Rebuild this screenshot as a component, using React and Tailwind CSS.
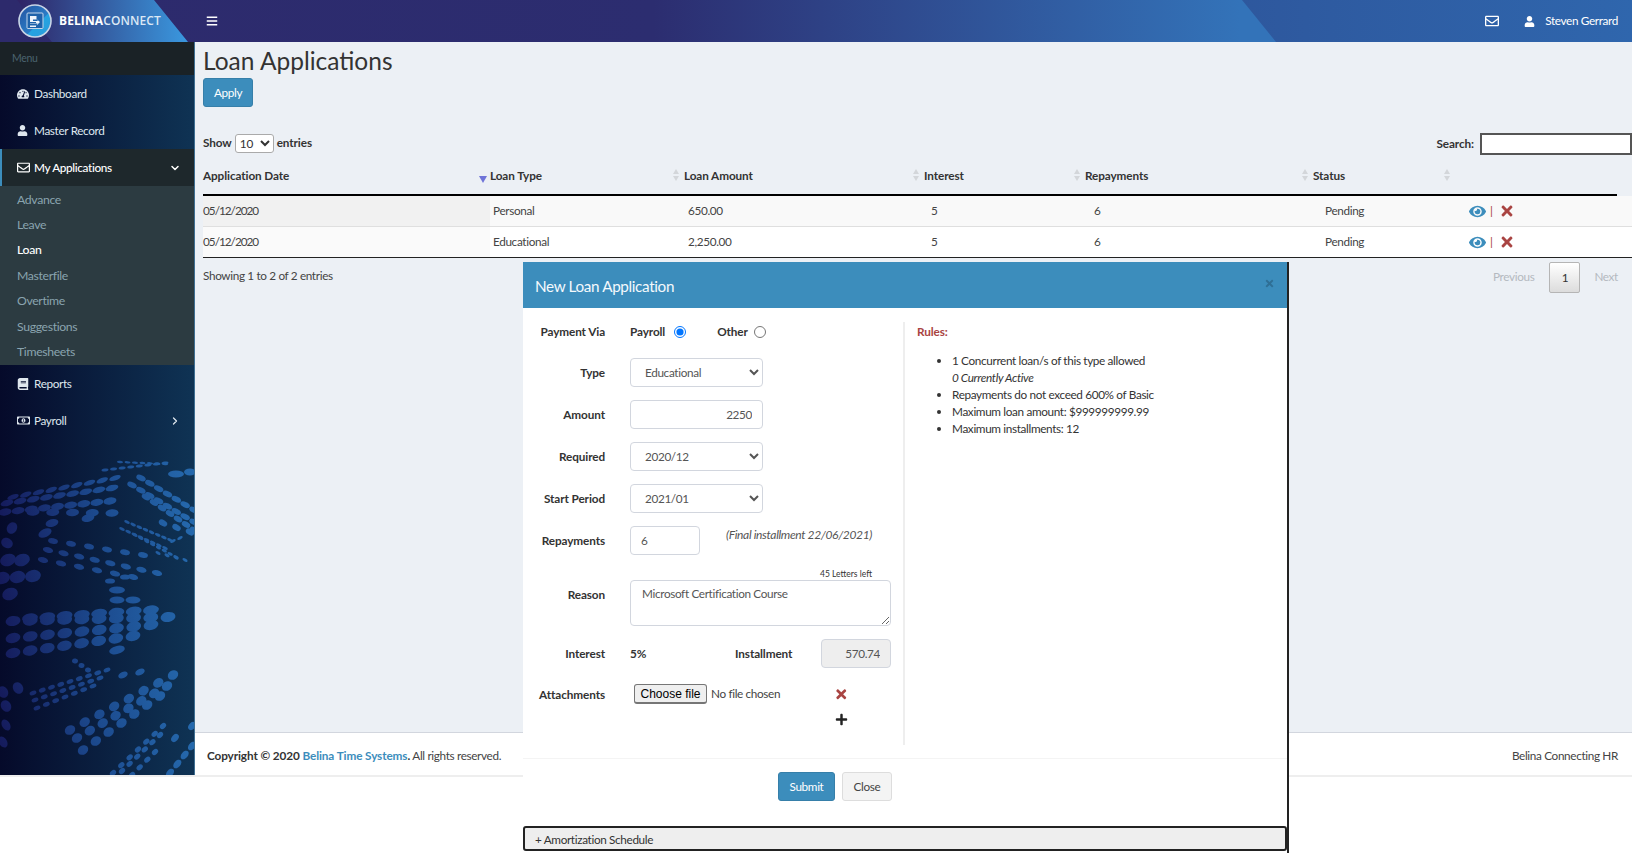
import { ChevronDown, ChevronRight } from "lucide-react";
import {
    FaBars,
    FaBook,
    FaEye,
    FaPlus,
    FaRegEnvelope,
    FaRegMoneyBillAlt,
    FaTachometerAlt,
    FaTimes,
    FaUser,
} from "react-icons/fa";

const gridCols = "grid grid-cols-[287px_194px_240px_161px_228px_142px_1fr]";

// x0, y0, x1, y1, count, rx, ry, rotation
const dotRows = [
    [105, 470, 165, 463, 8, 3.5, 1.5, -8],
    [120, 462, 165, 464, 7, 3, 1.2, 5],
    [176, 474, 176, 474, 1, 8, 3.5, 0],
    [190, 472, 190, 472, 1, 6, 3.5, 0],
    [13, 497, 115, 478, 9, 6, 2.5, -20],
    [7, 503, 112, 488, 9, 6.5, 3, -15],
    [5, 512, 110, 501, 9, 6.5, 3.5, -10],
    [33, 512, 112, 513, 5, 6.5, 3.8, -5],
    [52, 523, 88, 518, 2, 6.5, 3.8, -15],
    [45, 533, 45, 533, 1, 7, 4, -25],
    [141, 478, 194, 510, 7, 5, 2.8, 25],
    [132, 485, 194, 522, 8, 5, 2.8, 25],
    [146, 497, 194, 530, 7, 4.6, 2.8, 30],
    [163, 523, 190, 532, 3, 4.5, 3, 30],
    [127, 522, 170, 540, 8, 3, 1.5, 25],
    [122, 529, 165, 548, 8, 3, 1.5, 25],
    [135, 535, 176, 557, 8, 2.8, 1.5, 25],
    [158, 553, 185, 560, 4, 2.8, 1.5, 30],
    [173, 541, 180, 538, 2, 3, 1.5, -30],
    [53, 541, 143, 555, 6, 5, 2.8, 12],
    [48, 550, 157, 573, 8, 5.2, 2.8, 14],
    [43, 560, 133, 577, 6, 5.2, 2.8, 14],
    [110, 581, 125, 577, 2, 5, 2.6, 0],
    [12, 528, 12, 528, 1, 5, 6, 30],
    [7, 543, 7, 543, 1, 6, 5, 30],
    [8, 560, 22, 560, 2, 8, 6, -20],
    [2, 578, 33, 576, 3, 8, 6, -15],
    [10, 594, 10, 594, 1, 8, 6, -20],
    [117, 590, 117, 590, 1, 8, 3.5, 0],
    [117, 600, 133, 600, 2, 7.5, 3.5, 0],
    [30, 618, 151, 610, 8, 8, 4.5, -10],
    [13, 621, 168, 617, 10, 7.5, 5, -10],
    [13, 638, 151, 625, 9, 7.5, 5, -15],
    [13, 653, 133, 636, 8, 7.5, 5, -15],
    [117, 650, 117, 650, 1, 8, 4, -15],
    [33, 693, 107, 670, 9, 3.5, 2.2, -20],
    [35, 700, 100, 678, 8, 3.5, 2.2, -20],
    [37, 708, 93, 686, 7, 3.5, 2.2, -20],
    [75, 661, 88, 670, 3, 3, 2.5, 10],
    [70, 730, 173, 675, 8, 5.5, 4.5, -35],
    [77, 738, 167, 686, 8, 5.5, 4.5, -35],
    [83, 750, 160, 696, 7, 5.5, 4.5, -35],
    [123, 675, 140, 672, 2, 5, 3, -25],
    [113, 773, 163, 726, 7, 3.5, 2.5, -40],
    [122, 771, 160, 735, 6, 3.5, 2.5, -40],
    [132, 775, 155, 752, 4, 3.5, 2.5, -40],
    [170, 773, 192, 746, 4, 5, 3.2, -50],
    [175, 738, 192, 726, 2, 4.5, 3.2, -50],
    [3, 692, 18, 688, 2, 5, 6, -30],
    [6, 706, 13, 706, 1, 5, 6, -30],
    [6, 725, 6, 725, 1, 4, 6, -30],
    [3, 742, 3, 742, 1, 4, 6, -30],
];

function GlobeDots() {
    const dots = [];
    dotRows.forEach(([x0, y0, x1, y1, n, rx, ry, rot], i) => {
        for (let k = 0; k < n; k++) {
            const t = n > 1 ? k / (n - 1) : 0;
            const x = x0 + (x1 - x0) * t;
            const y = y0 + (y1 - y0) * t;
            dots.push(
                <ellipse key={i + "-" + k} cx={x} cy={y} rx={rx} ry={ry} transform={`rotate(${rot} ${x} ${y})`} />
            );
        }
    });
    return (
        <svg className="absolute left-0 top-[-42px] h-[775px] w-[194px]" viewBox="0 0 194 775">
            <defs>
                <linearGradient id="dotFill" gradientUnits="userSpaceOnUse" x1="0" y1="0" x2="194" y2="0">
                    <stop offset="0" stopColor="#151b5c" />
                    <stop offset="0.5" stopColor="#1c4a8e" />
                    <stop offset="1" stopColor="#2569ad" />
                </linearGradient>
            </defs>
            <g fill="url(#dotFill)">{dots}</g>
        </svg>
    );
}

function Logo() {
    return (
        <svg className="h-[34px] w-[34px] shrink-0" viewBox="0 0 34 34">
            <defs>
                <linearGradient id="logoFill" x1="0" y1="0" x2="1" y2="1">
                    <stop offset="0" stopColor="#24529f" />
                    <stop offset="0.58" stopColor="#2a7cc6" />
                    <stop offset="0.6" stopColor="#25a3e0" />
                    <stop offset="1" stopColor="#2d9cdc" />
                </linearGradient>
            </defs>
            <circle cx="17" cy="17" r="16" fill="url(#logoFill)" stroke="#c9d5e6" strokeWidth="1.6" />
            <rect x="9" y="9" width="16" height="15.500" rx="1" fill="#1e62aa" stroke="#c4d6ea" strokeWidth="1" />
            <path d="M12 12h6.500v3.500h-3.500v1.500h5l-1.500-2 3.500 3-3.500 3.500 1-2h-7.500v2h6v1.500H12v-4h6v-1H12z" fill="#eef4fb" />
        </svg>
    );
}

function Header() {
    return (
        <header className="relative flex h-[42px] items-center overflow-hidden bg-[linear-gradient(90deg,#2d2a6c,#2c2d70_40%,#3373b9_76%)] text-white">
            <div className="absolute inset-0 w-[188px] bg-[linear-gradient(90deg,#2f2466,#2f2466_10%,#3a98df_100%)] [clip-path:polygon(0_0,154px_0,188px_42px,52px_42px,17px_0)]" />
            <div className="absolute inset-0 bg-[linear-gradient(90deg,#2a2a6c,#2f66ad)] [clip-path:polygon(1242px_0,1632px_0,1632px_42px,1276px_42px)]" />
            <div className="relative flex w-[194px] items-center pl-[18px]">
                <Logo />
                <span className="ml-[7px] font-['Open_Sans',sans-serif] text-[12px] tracking-[0.1px]">
                    <span className="font-bold">BELINA</span>
                    <span className="font-semibold text-[#dbe8f5]">CONNECT</span>
                </span>
            </div>
            <FaBars className="relative ml-[12px] text-[12px]" />
            <div className="relative ml-auto flex items-center pr-[14px]">
                <FaRegEnvelope className="mr-[25px] text-[14px]" />
                <FaUser className="mr-[10px] text-[11px]" />
                <span>Steven Gerrard</span>
            </div>
        </header>
    );
}

function NavItem({ icon, label, arrow }) {
    return (
        <div className="relative flex h-[37px] items-center pl-[17px] text-[#dfe7ee]">
            <span className="flex w-[17px] justify-start text-[12px]">{icon}</span>
            <span>{label}</span>
            {arrow && <ChevronRight size={12} strokeWidth={2.5} className="absolute left-[169px]" />}
        </div>
    );
}

const subItems = ["Advance", "Leave", "Loan", "Masterfile", "Overtime", "Suggestions", "Timesheets"];

function Sidebar() {
    return (
        <aside className="relative h-[733px] w-[195px] shrink-0 overflow-hidden border-r border-[#3f6f92] bg-[linear-gradient(90deg,#050a2a,#0f3354)]">
            <GlobeDots />
            <div className="relative flex h-[33px] items-center bg-[#1a2226] pl-[12px] text-[10.5px] text-[#4b646f]">Menu</div>
            <div className="relative">
                <NavItem icon={<FaTachometerAlt />} label="Dashboard" />
                <NavItem icon={<FaUser className="text-[11px]" />} label="Master Record" />
                <div className="relative flex h-[37px] items-center border-l-2 border-[#3c8dbc] bg-[#1e282c] pl-[15px] font-medium text-white">
                    <FaRegEnvelope className="w-[17px] pr-[4px] text-[13px]" />
                    <span>My Applications</span>
                    <ChevronDown size={12} strokeWidth={3} className="absolute left-[167px]" />
                </div>
                <div className="flex h-[179px] flex-col justify-center bg-[#2c3b41] pt-[1px]">
                    {subItems.map((item) => (
                        <div
                            key={item}
                            className={`flex h-[25.5px] items-center pl-[17px] text-[12.25px] ${item === "Loan" ? "font-medium text-white" : "text-[#8aa4af]"}`}
                        >
                            {item}
                        </div>
                    ))}
                </div>
                <NavItem icon={<FaBook />} label="Reports" />
                <NavItem icon={<FaRegMoneyBillAlt className="text-[13px]" />} label="Payroll" arrow />
            </div>
        </aside>
    );
}

function SortArrows({ active }) {
    if (active) {
        return <span className="absolute right-[3px] top-[10px] h-0 w-0 border-x-[4px] border-t-[7px] border-x-transparent border-t-[#6f74d8]" />;
    }
    return (
        <span className="absolute right-[5px] top-[3px] flex flex-col gap-[2px]">
            <span className="h-0 w-0 border-x-[3.5px] border-b-[5px] border-x-transparent border-b-[#d3d6da]" />
            <span className="h-0 w-0 border-x-[3.5px] border-t-[5px] border-x-transparent border-t-[#d3d6da]" />
        </span>
    );
}

const columns = ["Application Date", "Loan Type", "Loan Amount", "Interest", "Repayments", "Status"];

const loans = [
    { date: "05/12/2020", type: "Personal", amount: "650.00" },
    { date: "05/12/2020", type: "Educational", amount: "2,250.00" },
];

function LoanRow({ loan, odd }) {
    return (
        <div className={`${gridCols} h-[31px] items-center border-b ${odd ? "border-[#dfdfdf] bg-[#f9f9f9]" : "border-[#222] bg-white"} text-[#444]`}>
            <div className={`flex h-full items-center tracking-[-1px] ${odd ? "bg-[#f1f1f1]" : "bg-[#fafafa]"}`}>{loan.date}</div>
            <div className="pl-[3px]">{loan.type}</div>
            <div className="pl-[4px]">{loan.amount}</div>
            <div className="pl-[7px]">5</div>
            <div className="pl-[9px]">6</div>
            <div className="pl-[12px]">Pending</div>
            <div className="flex items-center pl-[14px]">
                <FaEye className="text-[17px] text-[#3c8dbc]" />
                <span className="ml-[4px] text-[#a94442]">|</span>
                <FaTimes className="ml-[6px] text-[16px] text-[#a94442]" />
            </div>
        </div>
    );
}

function LoanTable() {
    return (
        <div>
            <div className="flex h-[24px] items-center justify-between font-bold tracking-[-0.1px] text-[#333]">
                <div className="flex items-center">
                    <span>Show</span>
                    <select className="mx-[3px] h-[19px] w-[39px] rounded-[3px] border border-[#aaa] bg-white font-normal">
                        <option>10</option>
                    </select>
                    <span>entries</span>
                </div>
                <div className="flex items-center pt-[2px]">
                    <span>Search:</span>
                    <input className="ml-[6px] h-[22px] w-[152px] border-2 border-[#555] bg-white" />
                </div>
            </div>
            <div className={`${gridCols} mt-[11px] h-[30px] w-[1414px] border-b-2 border-black pb-[11px] font-bold leading-[19px] tracking-[-0.1px] text-[#333]`}>
                {columns.map((col, i) => (
                    <div key={col} className="relative pr-[4px]">
                        {col}
                        <SortArrows active={i === 0} />
                    </div>
                ))}
                <div />
            </div>
            {loans.map((loan, i) => (
                <LoanRow key={i} loan={loan} odd={i === 0} />
            ))}
            <div className="flex items-center justify-between pt-[4px] text-[#444]">
                <span className="-translate-y-[2px]">Showing 1 to 2 of 2 entries</span>
                <div className="flex items-center pr-[14px] text-[#b4b9bf]">
                    <span className="-translate-y-[1px]">Previous</span>
                    <span className="ml-[15px] flex h-[31px] w-[31px] items-center justify-center rounded-[2px] border border-[#b5b5b5] bg-[linear-gradient(#ffffff,#dcdcdc)] text-[#333]">1</span>
                    <span className="ml-[14px] -translate-y-[1px]">Next</span>
                </div>
            </div>
        </div>
    );
}

function Field({ label, className = "", labelClass = "pt-[1px]", children }) {
    return (
        <div className={`flex items-center ${className}`}>
            <label className={`w-[82px] shrink-0 text-right font-bold tracking-[-0.1px] text-[#333] ${labelClass}`}>{label}</label>
            <div className="ml-[25px] flex flex-1 items-center">{children}</div>
        </div>
    );
}

const controlCls = "rounded-[4px] border border-[#d2d6de] bg-white text-[#555]";

function LoanModal() {
    return (
        <div className="absolute left-[523px] top-[262px] h-[591px] w-[766px] border-r-2 border-[#222] bg-white text-[#333]">
            <div className="flex h-[46px] items-center justify-between bg-[#3c8dbc] pl-[12px] pr-[12px] text-[#f4f9fc]">
                <span className="pt-[3px] text-[15.25px]">New Loan Application</span>
                <FaTimes className="-mt-[3px] text-[11px] text-[#2f6f95]" />
            </div>
            <div className="flex h-[437px] pt-[14px]">
                <div className="w-[382px] border-r-2 border-[#eeeeee]">
                    <Field label="Payment Via" className="h-[19px]">
                        <span className="font-bold tracking-[-0.1px]">Payroll</span>
                        <input type="radio" name="via" defaultChecked className="ml-[9px] h-[12px] w-[12px]" />
                        <span className="ml-[31px] font-bold tracking-[-0.1px]">Other</span>
                        <input type="radio" name="via" className="ml-[6px] h-[12px] w-[12px]" />
                    </Field>
                    <Field label="Type" className="mt-[17px]">
                        <select className={`${controlCls} h-[29px] w-[133px] pl-[10px]`} defaultValue="Educational">
                            <option>Educational</option>
                        </select>
                    </Field>
                    <Field label="Amount" className="mt-[13px]">
                        <input className={`${controlCls} h-[29px] w-[133px] pr-[10px] text-right`} defaultValue="2250" />
                    </Field>
                    <Field label="Required" className="mt-[13px]">
                        <select className={`${controlCls} h-[29px] w-[133px] pl-[10px]`}>
                            <option>2020/12</option>
                        </select>
                    </Field>
                    <Field label="Start Period" className="mt-[13px]">
                        <select className={`${controlCls} h-[29px] w-[133px] pl-[10px]`}>
                            <option>2021/01</option>
                        </select>
                    </Field>
                    <Field label="Repayments" className="mt-[13px]">
                        <input className={`${controlCls} h-[29px] w-[70px] pl-[10px]`} defaultValue="6" />
                        <span className="ml-[26px] -translate-y-[6px] text-[12px] italic text-[#555]">(Final installment 22/06/2021)</span>
                    </Field>
                    <div className="mt-[14px] pr-[31px] text-right text-[8.5px] leading-[11px] tracking-[0] text-[#333]">45 Letters left</div>
                    <Field label="Reason" className="items-start" labelClass="pt-[6px]">
                        <textarea className={`${controlCls} h-[46px] w-[261px] px-[11px] py-[5px] leading-[16px]`} defaultValue="Microsoft Certification Course" />
                    </Field>
                    <Field label="Interest" className="mt-[13px] h-[29px]">
                        <span className="w-[105px] font-bold tracking-[-0.1px]">5%</span>
                        <span className="w-[86px] font-bold tracking-[-0.1px]">Installment</span>
                        <input disabled className={`${controlCls} h-[29px] w-[70px] !bg-[#eeeeee] pr-[10px] text-right`} defaultValue="570.74" />
                    </Field>
                    <Field label="Attachments" className="mt-[16px] items-start" labelClass="pt-[2px]">
                        <button className="ml-[4px] h-[20px] w-[73px] rounded-[3px] border border-b-2 border-[#767676] bg-[#efefef] font-['Liberation_Sans',sans-serif] text-[12px] leading-none tracking-normal text-black">
                            Choose file
                        </button>
                        <span className="ml-[4px] w-[123px] text-[#444]">No file chosen</span>
                        <FaTimes className="text-[14.5px] text-[#a94442]" />
                    </Field>
                    <div className="mt-[9px] pl-[312px]">
                        <FaPlus className="text-[13px] text-[#222]" />
                    </div>
                </div>
                <div className="pl-[12px] pt-[1px] leading-[17px] text-[#333]">
                    <h4 className="h-[19px] font-bold tracking-[-0.1px] text-[#a94442]">Rules:</h4>
                    <ul className="mt-[10px] list-disc pl-[35px]">
                        <li>
                            1 Concurrent loan/s of this type allowed
                            <br />
                            <i>0 Currently Active</i>
                        </li>
                        <li>Repayments do not exceed 600% of Basic</li>
                        <li>Maximum loan amount: $999999999.99</li>
                        <li>Maximum installments: 12</li>
                    </ul>
                </div>
            </div>
            <div className="mt-[13px] flex h-[46px] items-start justify-end gap-[7px] border-t border-[#f4f4f4] pr-[395px] pt-[13px]">
                <button className="h-[29px] w-[57px] rounded-[3px] border border-[#367fa9] bg-[#3c8dbc] text-white">Submit</button>
                <button className="h-[29px] w-[50px] rounded-[3px] border border-[#dddddd] bg-[#f4f4f4] text-[#444]">Close</button>
            </div>
            <div className="mt-[22px] flex h-[25px] items-center rounded-[3px] border-2 border-[#222] bg-[#eeeeee] pl-[10px] pt-[2px] text-[#333]">
                + Amortization Schedule
            </div>
        </div>
    );
}

export default function App() {
    return (
        <div className="relative h-[853px] overflow-hidden bg-white font-['Lato',sans-serif] text-[11.75px] tracking-[-0.35px]">
            <Header />
            <div className="flex border-b-2 border-[#eeeeee]">
                <Sidebar />
                <main className="flex min-w-0 flex-1 flex-col">
                    <div className="flex-1 bg-[#ecf0f5] pl-[8px] text-[#333]">
                        <h1 className="pt-[4px] text-[24.5px] leading-[30px] tracking-normal text-[#333]">Loan Applications</h1>
                        <button className="mt-[2px] h-[29px] w-[50px] rounded-[3px] border border-[#367fa9] bg-[#3c8dbc] text-white">Apply</button>
                        <div className="mt-[24px]">
                            <LoanTable />
                        </div>
                    </div>
                    <footer className="flex h-[43px] items-center justify-between border-t border-[#d2d6de] bg-white pl-[12px] pr-[14px] pt-[3px] text-[#444]">
                        <span>
                            <b className="tracking-[-0.1px] text-[#333]">Copyright © 2020 <a className="text-[#3c8dbc]">Belina Time Systems</a>.</b> All rights reserved.
                        </span>
                        <span>Belina Connecting HR</span>
                    </footer>
                </main>
            </div>
            <LoanModal />
        </div>
    );
}
